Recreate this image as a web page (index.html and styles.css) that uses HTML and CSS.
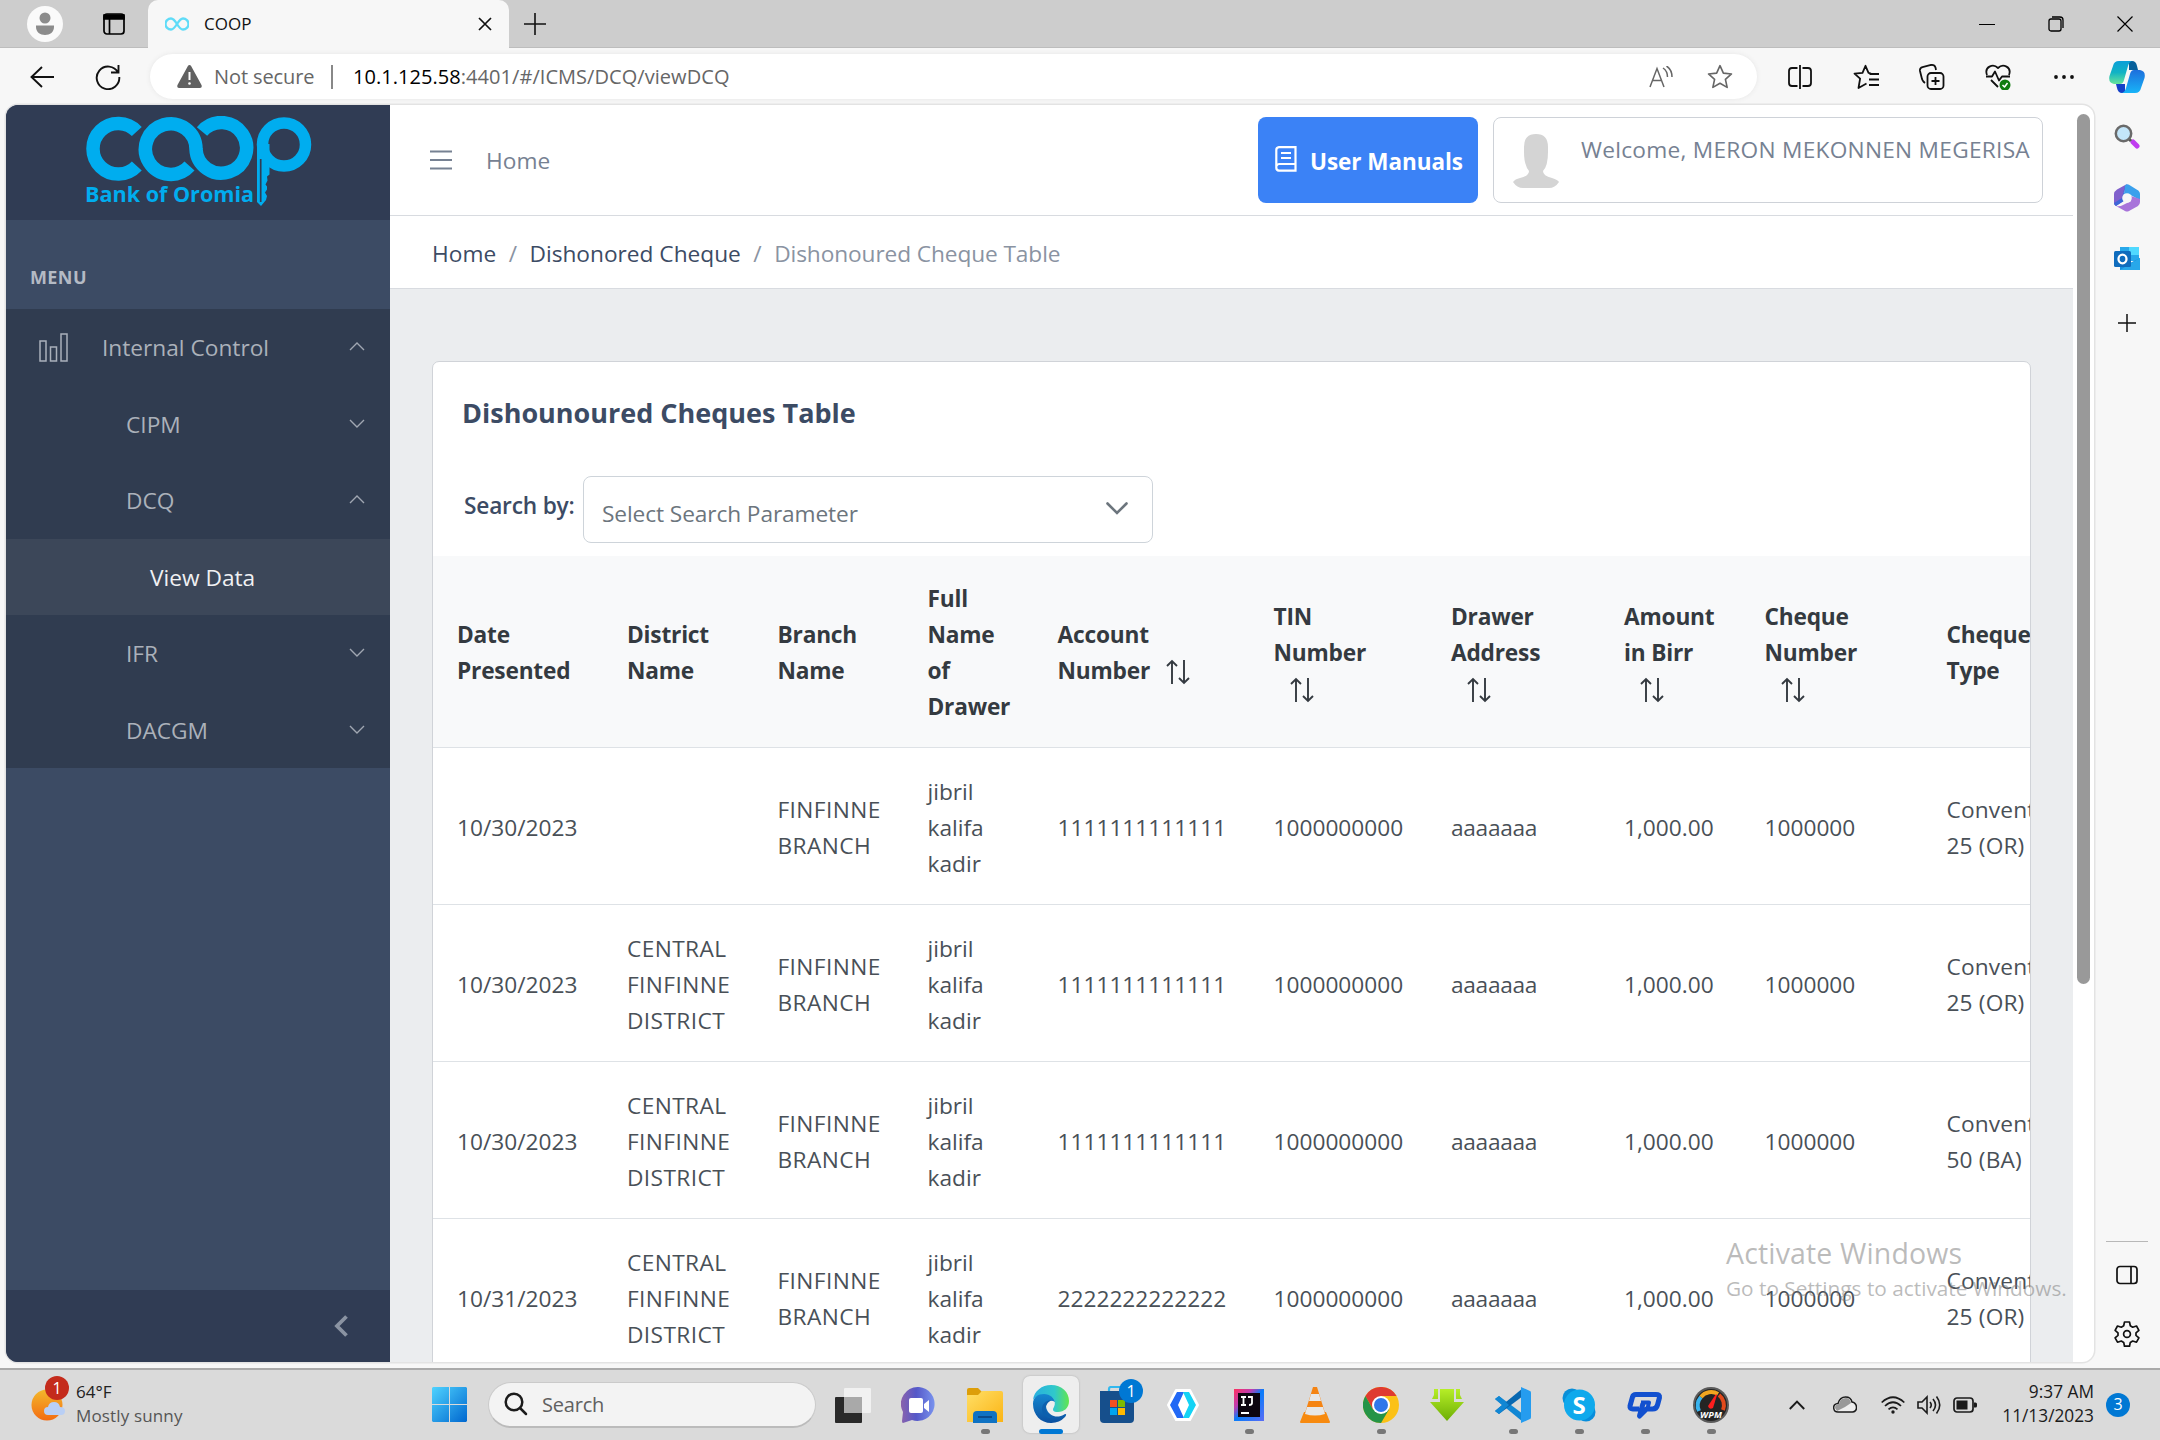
FILE: index.html
```html
<!DOCTYPE html>
<html lang="en">
<head>
<meta charset="utf-8">
<title>COOP</title>
<link rel="stylesheet" href="styles.css">
</head>
<body>
<div class="tabstrip">
  <svg class="profile" width="36" height="36" viewBox="0 0 36 36"><circle cx="18" cy="18" r="18" fill="#fafafa"/><circle cx="18" cy="12" r="5.500" fill="#8c8c8c"/><path d="M9 19.500h18v1.500c0 5-4 8-9 8s-9-3-9-8z" fill="#8c8c8c"/></svg>
  <svg class="workspace" width="22" height="22" viewBox="0 0 22 22" fill="none" stroke="#000" stroke-width="1.700"><rect x="1" y="1" width="20" height="20" rx="3"/><path d="M1 2h20v4H1z" fill="#000"/><path d="M6.500 6v15"/></svg>
  <div class="tab">
    <svg width="24" height="14" viewBox="0 0 24 14" fill="none" stroke="#5fdcf8" stroke-width="2.300"><path d="M12 7C9 2 7.500 1.500 6 1.500a5.500 5.500 0 0 0 0 11C8 12.500 9.500 11 12 7s4-5.500 6-5.500a5.500 5.500 0 0 1 0 11C16.500 12.500 15 12 12 7z"/></svg>
    <span class="tab-title">COOP</span>
    <svg width="14" height="14" viewBox="0 0 14 14" stroke="#111" stroke-width="1.700"><path d="M1 1l12 12M13 1L1 13"/></svg>
  </div>
  <svg class="newtab" width="22" height="22" viewBox="0 0 22 22" stroke="#111" stroke-width="1.600"><path d="M11 0v22M0 11h22"/></svg>
  <div class="winctl">
    <svg width="16" height="16" viewBox="0 0 16 16" stroke="#000"><path d="M0 8.500h16"/></svg>
    <svg width="16" height="16" viewBox="0 0 16 16" fill="none" stroke="#000" stroke-width="1.300"><rect x="1" y="3" width="12" height="12" rx="2"/><path d="M4 1h8q3 0 3 3v8"/></svg>
    <svg width="16" height="16" viewBox="0 0 16 16" stroke="#000" stroke-width="1.200"><path d="M.5.5l15 15M15.500.5l-15 15"/></svg>
  </div>
</div>

<div class="toolbar">
  <svg class="back" width="24" height="22" viewBox="0 0 24 22" fill="none" stroke="#111" stroke-width="1.900"><path d="M24 11H1.500M12 1L1.500 11 12 21"/></svg>
  <svg class="reload" width="26" height="26" viewBox="0 0 26 26" fill="none" stroke="#111" stroke-width="1.900"><path d="M23 8.500A11.300 11.300 0 1 0 24.300 13M23.500 1v7.500H16"/></svg>
  <div class="address">
    <svg width="25" height="23" viewBox="0 0 25 23"><path d="M12.500 0q1 0 1.600 1.100L24.500 20q1 2.600-1.500 3H2q-2.500-.4-1.500-3L10.900 1.100Q11.500 0 12.500 0z" fill="#616161"/><path d="M12.500 7v8" stroke="#fff" stroke-width="2"/><circle cx="12.500" cy="18.500" r="1.300" fill="#fff"/></svg>
    <span class="insecure">Not secure</span><i class="divider"></i><span class="url"><b>10.1.125.58</b>:4401/#/ICMS/DCQ/viewDCQ</span>
    <svg class="read" width="24" height="22" viewBox="0 0 24 22" fill="none" stroke="#666" stroke-width="1.500"><path d="M1 21L8 2.500 15 21M3.500 14.500h9M14 2q4.500 3 4.500 9M17.500 0Q23 3.500 23 11"/></svg>
    <svg width="26" height="26" viewBox="0 0 24 24" fill="none" stroke="#666" stroke-width="1.500" stroke-linejoin="round"><path d="M12 1.500l3.100 6.900 7.500.8-5.600 5 1.600 7.400L12 17.800l-6.600 3.800L7 14.200l-5.600-5 7.500-.8z"/></svg>
  </div>
  <div class="tools">
    <svg width="26" height="26" viewBox="0 0 26 26" fill="none" stroke="#111" stroke-width="1.800"><path d="M10.500 4H5Q2 4 2 7v12q0 3 3 3h5.500M15.500 4H21q3 0 3 3v12q0 3-3 3h-5.500M13 1v24"/></svg>
    <svg width="26" height="26" viewBox="0 0 26 26" fill="none" stroke="#111" stroke-width="1.800" stroke-linejoin="round"><path d="M18 9.500L15.500 8.800 12.500 1.800 9.500 8.800l-8 .8 5.600 5-1.600 9.400 8-4.500M16.500 10H26M16 15.500h10M16 21h10"/></svg>
    <svg width="26" height="26" viewBox="0 0 26 26" fill="none" stroke="#111" stroke-width="1.800"><rect x="8.500" y="9" width="16" height="16" rx="3.500"/><path d="M16.500 13v8M12.500 17h8M6 19Q3 17 2.500 13L1 7q-.5-3 2.500-3.800L12 1q3.500-.5 4.500 2.500l.5 2.500"/></svg>
    <svg width="26" height="26" viewBox="0 0 26 26" fill="none" stroke="#111" stroke-width="1.800" stroke-linejoin="round"><path d="M2 11C-1 3 8-1 13 4c5-5 14-1 11 7M1 12.500h6l3-5 4 9 3-4h8M6 16l7 7"/><circle cx="20" cy="21" r="5.500" fill="#107c10" stroke="none"/><path d="M17.500 21l2 2 3-4" stroke="#fff" stroke-width="1.500"/></svg>
    <svg width="26" height="26" viewBox="0 0 26 26" fill="#111"><circle cx="5" cy="13" r="1.900"/><circle cx="13" cy="13" r="1.900"/><circle cx="21" cy="13" r="1.900"/></svg>
  </div>
  <svg class="copilot" width="36" height="34" viewBox="0 0 36 34"><defs><linearGradient id="cpa" x2="0" y2="1"><stop stop-color="#0b9fd8"/><stop offset=".5" stop-color="#12b3c4"/><stop offset="1" stop-color="#67e49a"/></linearGradient><linearGradient id="cpb" x2="0" y2="1"><stop stop-color="#1d6fdc"/><stop offset="1" stop-color="#18b4f8"/></linearGradient></defs><path d="M20 1h3q4 0 5 5l1 4h-9z" fill="#07609a"/><path d="M16 33h-3q-4 0-5-5l-1-4h9z" fill="#1440c8"/><path d="M10 1h13q-3 1-4 5l-4 14q-1 4-4 4H5q-6-1-4.500-8L4 6q1-5 6-5z" fill="url(#cpa)"/><path d="M26 33H13q3-1 4-5l4-14q1-4 4-4h6q6 1 4.500 8L32 28q-1 5-6 5z" fill="url(#cpb)"/></svg>
</div>

<div class="middle">
  <div class="page">
    <aside class="sidebar">
      <div class="brand">
        <svg width="228" height="92" viewBox="85 116 228 92" fill="none" stroke="#00adef" stroke-width="13.500"><path d="M136.800 131.500A25.300 25.300 0 1 0 136.800 166"/><path d="M189.500 166A25.300 25.300 0 1 1 196 149A25.300 25.300 0 1 0 202 131.500"/><circle cx="284" cy="144.500" r="21.500" stroke-width="11.500"/><path d="M257 144h12.500v30.500l-2.500 2 .5 4-2 4 1.500 2v3l-2 3 2 3.500-1 4-5 6-4-4z" fill="#00adef" stroke="none"/><path d="M260.700 159v43" stroke="#303c54" stroke-width="1.700"/><text x="85" y="201.500" textLength="169" lengthAdjust="spacingAndGlyphs" fill="#00adef" stroke="none" class="logo-text">Bank of Oromia</text></svg>
      </div>
      <div class="menu-title">MENU</div>
      <nav>
        <a class="root"><svg class="bars" width="29" height="29" viewBox="0 0 29 29" fill="none" stroke="#a9b0ba" stroke-width="1.500"><path d="M1 8h6v20H1zM11.500 14h6v14h-6zM22 1h6v27h-6z"/></svg>Internal Control<svg class="arrow up" viewBox="0 0 16 9"><path d="M1 1l7 7 7-7"/></svg></a>
        <a>CIPM<svg class="arrow" viewBox="0 0 16 9"><path d="M1 1l7 7 7-7"/></svg></a>
        <a>DCQ<svg class="arrow up" viewBox="0 0 16 9"><path d="M1 1l7 7 7-7"/></svg></a>
        <a class="active">View Data</a>
        <a>IFR<svg class="arrow" viewBox="0 0 16 9"><path d="M1 1l7 7 7-7"/></svg></a>
        <a>DACGM<svg class="arrow" viewBox="0 0 16 9"><path d="M1 1l7 7 7-7"/></svg></a>
      </nav>
      <div class="minimizer"><svg width="14" height="22" viewBox="0 0 14 22" fill="none" stroke="#8a93a2" stroke-width="3.800"><path d="M12.500 1.500L3 11l9.500 9.500"/></svg></div>
    </aside>
    <main>
      <header>
        <svg class="burger" width="22" height="20" viewBox="0 0 22 20" stroke="#768192" stroke-width="2"><path d="M0 1.500h22M0 10h22M0 18.500h22"/></svg>
        <span class="home">Home</span>
        <button class="manuals"><svg width="22" height="26" viewBox="0 0 22 26" fill="none" stroke="#fff" stroke-width="2.200"><path d="M4 1.200h16.500v23.500H4q-2.700-.3-2.700-3V4Q1.300 1.500 4 1.200zM1.500 20q.5-2 3-2h16M6 7h10M6 12h10"/></svg>User Manuals</button>
        <div class="welcome"><svg width="46" height="54" viewBox="0 0 46 54"><path d="M11 13Q11 0 23 0t12 13v5q0 14-5 19 0 5 9 7 6 2 7 4-4 6-10 6H10Q4 54 0 48q2-3 7-4 9-2 9-7-5-6-5-19z" fill="#d4d4d4"/></svg><span>Welcome, MERON MEKONNEN MEGERISA</span></div>
      </header>
      <div class="crumbs"><span>Home</span><em>/</em><span>Dishonored Cheque</span><em>/</em><span class="current">Dishonoured Cheque Table</span></div>
      <section class="card">
        <h1>Dishounoured Cheques Table</h1>
        <div class="search"><label>Search by:</label><div class="select"><span>Select Search Parameter</span><svg width="22" height="13" viewBox="0 0 22 13" fill="none" stroke="#6c757d" stroke-width="2.600" stroke-linecap="round"><path d="M1.500 1.500L11 11l9.500-9.500"/></svg></div></div>
        <table>
          <colgroup><col class="c1"><col class="c2"><col class="c3"><col class="c4"><col class="c5"><col class="c6"><col class="c7"><col class="c8"><col class="c9"><col class="c10"></colgroup>
          <thead><tr>
            <th>Date<br>Presented</th><th>District<br>Name</th><th>Branch<br>Name</th><th>Full<br>Name<br>of<br>Drawer</th>
            <th>Account<br>Number<svg class="sort" viewBox="0 0 24 26"><path d="M6 25V2M1 7l5-5 5 5M18 1v23M13 19l5 5 5-5"/></svg></th>
            <th>TIN<br>Number<br><svg class="sort" viewBox="0 0 24 26"><path d="M6 25V2M1 7l5-5 5 5M18 1v23M13 19l5 5 5-5"/></svg></th>
            <th>Drawer<br>Address<br><svg class="sort" viewBox="0 0 24 26"><path d="M6 25V2M1 7l5-5 5 5M18 1v23M13 19l5 5 5-5"/></svg></th>
            <th>Amount<br>in Birr<br><svg class="sort" viewBox="0 0 24 26"><path d="M6 25V2M1 7l5-5 5 5M18 1v23M13 19l5 5 5-5"/></svg></th>
            <th>Cheque<br>Number<br><svg class="sort" viewBox="0 0 24 26"><path d="M6 25V2M1 7l5-5 5 5M18 1v23M13 19l5 5 5-5"/></svg></th>
            <th>Cheque<br>Type</th>
          </tr></thead>
          <tbody>
            <tr><td>10/30/2023</td><td class="caps"></td><td class="caps">FINFINNE<br>BRANCH</td><td>jibril<br>kalifa<br>kadir</td><td>1111111111111</td><td>1000000000</td><td class="addr">aaaaaaa</td><td>1,000.00</td><td>1000000</td><td class="type">Conventional<br>25 (OR)</td></tr>
            <tr><td>10/30/2023</td><td class="caps">CENTRAL<br>FINFINNE<br>DISTRICT</td><td class="caps">FINFINNE<br>BRANCH</td><td>jibril<br>kalifa<br>kadir</td><td>1111111111111</td><td>1000000000</td><td class="addr">aaaaaaa</td><td>1,000.00</td><td>1000000</td><td class="type">Conventional<br>25 (OR)</td></tr>
            <tr><td>10/30/2023</td><td class="caps">CENTRAL<br>FINFINNE<br>DISTRICT</td><td class="caps">FINFINNE<br>BRANCH</td><td>jibril<br>kalifa<br>kadir</td><td>1111111111111</td><td>1000000000</td><td class="addr">aaaaaaa</td><td>1,000.00</td><td>1000000</td><td class="type">Conventional<br>50 (BA)</td></tr>
            <tr><td>10/31/2023</td><td class="caps">CENTRAL<br>FINFINNE<br>DISTRICT</td><td class="caps">FINFINNE<br>BRANCH</td><td>jibril<br>kalifa<br>kadir</td><td>2222222222222</td><td>1000000000</td><td class="addr">aaaaaaa</td><td>1,000.00</td><td>1000000</td><td class="type">Conventional<br>25 (OR)</td></tr>
          </tbody>
        </table>
      </section>
    </main>
    <div class="scroll"><div class="thumb"></div></div>
  </div>
  <div class="edgebar">
    <svg width="26" height="26" viewBox="0 0 26 26"><path d="M19 18l4 4" stroke="#c03cf0" stroke-width="5" stroke-linecap="round"/><path d="M14 14l3 3" stroke="#555" stroke-width="3"/><circle cx="9.500" cy="9.500" r="7.700" fill="#c3e6fa" stroke="#6a6a6a" stroke-width="2.500"/></svg>
    <svg width="26" height="28" viewBox="0 0 26 28"><path d="M13 0L3 5.500Q0 7.500 0 10v9q0 2 2 3l7-5v-6q0-2 1-3z" fill="#8060cc"/><path d="M11 1.500q2-1.800 4-.8l8 5q3 1.500 3 4.500v6l-9-5-7-1z" fill="#3aa0ec"/><path d="M11 1.500L10 10v7l-8 5q-2-1-2-3l8-5z" fill="#3f66d8"/><path d="M26 15v3q0 2.500-2 4l-9 5q-2 1.200-4 0l-9-5q4 1 7-1l8-4V12z" fill="#a874da"/><circle cx="13" cy="14" r="4.800" fill="#f7f7f7"/></svg>
    <svg width="26" height="26" viewBox="0 0 26 26"><path d="M6 1h19v14H6z" fill="#28a8ea"/><path d="M15 1h10v8H15z" fill="#50d9ff"/><path d="M6 12l10 5 10-5v12H6z" fill="#1490df"/><path d="M6 24l20-12v12z" fill="#28a8ea"/><rect y="5" width="17" height="16" rx="1.500" fill="#0f6cbd"/><ellipse cx="8.500" cy="13" rx="4" ry="4.300" fill="none" stroke="#fff" stroke-width="2.300"/></svg>
    <svg class="add" width="18" height="18" viewBox="0 0 18 18" stroke="#111" stroke-width="1.500"><path d="M9 0v18M0 9h18"/></svg>
    <i class="rule"></i>
    <svg class="panel" width="22" height="20" viewBox="0 0 22 20" fill="none" stroke="#111" stroke-width="1.700"><rect x="1" y="1.500" width="20" height="17" rx="3"/><path d="M15 1.500v17"/></svg>
    <svg class="gear" width="26" height="26" viewBox="0 0 26 26" fill="none" stroke="#111" stroke-width="1.700" stroke-linejoin="round"><circle cx="13" cy="13" r="3.400"/><path d="M10.500 1h5l.8 3.800 2.400 1.400 3.800-1.200 2.400 4.300-2.900 2.500v2.600l2.900 2.500-2.400 4.300-3.800-1.200-2.400 1.400-.8 3.800h-5l-.8-3.800-2.400-1.400-3.800 1.200-2.400-4.300L4 14.400v-2.600L1.100 9.300 3.500 5l3.800 1.200 2.400-1.400z"/></svg>
  </div>
</div>

<div class="taskbar">
  <div class="weather">
    <div class="sun"><svg width="36" height="36" viewBox="0 0 36 36"><defs><linearGradient id="sun" x2="0" y2="1"><stop stop-color="#f3b92c"/><stop offset="1" stop-color="#f36c12"/></linearGradient></defs><circle cx="16" cy="16" r="15.500" fill="url(#sun)"/><path d="M17 26q-4 0-4-4t4-4q1-5 6-5t6 5q5 0 5 4t-4 4z" fill="#b9cff5"/></svg><span class="alert">1</span></div>
    <div><div class="deg">64°F</div><div class="cond">Mostly sunny</div></div>
  </div>
  <svg class="start" width="35" height="35" viewBox="0 0 35 35"><defs><linearGradient id="win" x2="1" y2="1"><stop stop-color="#4fd3ff"/><stop offset="1" stop-color="#0067cf"/></linearGradient></defs><path d="M1 0h16v17H0V1zM18 0h16l1 1v16H18zM0 18h17v17H1l-1-1zM18 18h17v16l-1 1H18z" fill="url(#win)"/></svg>
  <div class="find"><svg width="24" height="24" viewBox="0 0 24 24" fill="none" stroke="#1b1b1b" stroke-width="2.500" stroke-linecap="round"><circle cx="10" cy="10" r="8.300"/><path d="M16 16l6 6"/></svg>Search</div>
  <div class="apps">
    <div><svg width="36" height="36" viewBox="0 0 36 36"><rect x="0" y="10" width="27" height="26" rx="1" fill="#292929"/><rect x="9" y="1" width="27" height="25" rx="1" fill="#f4f4f4" fill-opacity=".88"/><path d="M9 10h18v16H9z" fill="#a9a9a9"/></svg></div>
    <div><svg width="36" height="38" viewBox="0 0 36 38"><defs><linearGradient id="cht" x2="1"><stop stop-color="#8a62ad"/><stop offset=".45" stop-color="#5558c8"/><stop offset="1" stop-color="#7993ee"/></linearGradient></defs><path d="M18 1a17 17 0 1 1-7 33l-9 3q-1 0-1-2l1-9A17 17 0 0 1 18 1z" fill="url(#cht)"/><rect x="8" y="12" width="14" height="15" rx="2" fill="#fff"/><path d="M23 18l5-4v12l-5-4z" fill="#fff"/></svg></div>
    <div class="run"><svg width="36" height="36" viewBox="0 0 36 36"><defs><linearGradient id="fol" x2="1" y2="1"><stop stop-color="#ffdf67"/><stop offset="1" stop-color="#fbb414"/></linearGradient></defs><path d="M0 3q0-2 2-2h9l4 4v6H0z" fill="#dd9e09"/><path d="M0 8h11l4-4h19q2 0 2 2v29H0z" fill="url(#fol)"/><path d="M6 36v-8q0-4 4-4h16q4 0 4 4v8z" fill="#0f72c3"/><path d="M11 30h14" stroke="#0a4b8c" stroke-width="2"/></svg></div>
    <div class="on"><svg width="38" height="38" viewBox="0 0 38 38"><defs><linearGradient id="ea" x2="1"><stop stop-color="#28afe0"/><stop offset=".6" stop-color="#30c8cb"/><stop offset="1" stop-color="#62e64d"/></linearGradient><linearGradient id="eb" x2="0" y2="1"><stop stop-color="#1587d0"/><stop offset="1" stop-color="#0b50a0"/></linearGradient></defs><path d="M1 15C2 6 10 0 19 0c11 0 18 7 18 16 0 7-5 11-11 11-5 0-6-2-4-5 3-6-2-12-9-12C7 10 3 12 1 15z" fill="url(#ea)"/><path d="M1 19C1 12 6 9 12 9s10 4 11 8c-6-4-11 2-8 8s10 9 18 4c2 0 1 2 0 3a19 19 0 0 1-14 6C9 38 1 30 1 19z" fill="url(#eb)"/><path d="M20 15c-9 4-8 14 0 18-5 1-10-3-10-9 0-5 4-9 10-9z" fill="#0c60ae"/></svg></div>
    <div class="store"><svg width="36" height="38" viewBox="0 0 36 38"><path d="M10 8V3q0-2 2-2h12q2 0 2 2v5" fill="none" stroke="#32b8ee" stroke-width="2.200"/><path d="M1 5h34v28q0 4-4 4H5q-4 0-4-4z" fill="#164f8c"/><path d="M11 14h7v7h-7z" fill="#f25022"/><path d="M19 14h7v7h-7z" fill="#7fba00"/><path d="M11 22h7v7h-7z" fill="#00a4ef"/><path d="M19 22h7v7h-7z" fill="#ffb900"/></svg><span class="count">1</span></div>
    <div><svg width="32" height="32" viewBox="0 0 32 32"><path d="M9 1h14l8 15-8 15H9L1 16z" fill="#fff" stroke="#fff" stroke-width="2" stroke-linejoin="round"/><path d="M10 3h7l-6 13 6 13h-7L3 16z" fill="#2168f5"/><path d="M16 3h6l7 13-7 13h-6l6-13z" fill="#14d3f5"/><path d="M16 9l4 7-4 7-4-7z" fill="#fff"/></svg></div>
    <div class="run"><svg width="30" height="32" viewBox="0 0 30 32"><defs><linearGradient id="ij" x2="1" y2="1"><stop stop-color="#fe315d"/><stop offset=".3" stop-color="#c13bb0"/><stop offset=".5" stop-color="#087cfa"/><stop offset="1" stop-color="#5b6cf5"/></linearGradient></defs><path d="M0 0h30v32H0z" fill="url(#ij)"/><path d="M4 4h22v24H4z" fill="#0d0510"/><path d="M7 8h5M9.500 8v8M7 16h5M14 8h4v6q0 2-3 2M7 24h8" fill="none" stroke="#fff" stroke-width="1.800"/></svg></div>
    <div><svg width="32" height="38" viewBox="0 0 32 38"><path d="M5 26h22l4 10q0 1-1 1H2q-1 0-1-1z" fill="#f78a0f"/><path d="M14 1h4l8 26q-10 5-20 0z" fill="#f58413"/><path d="M12 8h8l2 7H10zM8 21h16l2 7q-10 3-20 0z" fill="#e7e7e7"/></svg></div>
    <div class="run"><svg width="36" height="36" viewBox="0 0 36 36"><circle cx="18" cy="18" r="18" fill="#fbc116"/><path d="M2.400 9A18 18 0 0 1 33.600 9H18l-8 13.500z" fill="#df3a31"/><path d="M2.400 9A18 18 0 0 0 18 36l8-13.500H10z" fill="#259447"/><circle cx="18" cy="18" r="9" fill="#fff"/><circle cx="18" cy="18" r="7" fill="#3077ea"/></svg></div>
    <div><svg width="36" height="36" viewBox="0 0 36 36"><defs><linearGradient id="gr" x2="0" y2="1"><stop stop-color="#b6ee27"/><stop offset="1" stop-color="#6dae05"/></linearGradient></defs><path d="M11 2h14v13h10L18 34 1 15h10zM5 2h4v10H3l2-4zM27 2h4v6l2 4h-6z" fill="url(#gr)"/></svg></div>
    <div class="run"><svg width="36" height="36" viewBox="0 0 36 36"><path d="M0 12l4-3 24 18v8z" fill="#1187d4"/><path d="M0 24l4 3L28 9V1z" fill="#0868b1"/><path d="M0 12l4-3 10 9-10 9-4-3 7-6z" fill="#1187d4"/><path d="M26 0l9 4q1 0 1 2v24q0 2-1 2l-9 4z" fill="#259cef"/></svg></div>
    <div class="run"><svg width="34" height="34" viewBox="0 0 34 34"><circle cx="10" cy="10" r="9.500" fill="#0a8fd8"/><circle cx="24" cy="24" r="9.500" fill="#078ddc"/><circle cx="17.500" cy="17" r="15.500" fill="#0fa9ec"/><text x="17" y="25.500" class="skype" text-anchor="middle">S</text></svg></div>
    <div class="run"><svg width="36" height="30" viewBox="0 0 36 30" fill="none" stroke="#1250cf" stroke-width="5" stroke-linejoin="round"><path d="M12 19H6q-3.500 0-3-3L5.500 7Q6 4.500 9 4.500h20q4 0 3.500 3L30.500 15q-1 4-5 4h-6l-7 7 3.500-12.500"/><path d="M14 12.500h8l-1.500 6" stroke-width="4"/></svg></div>
    <div class="run"><svg width="36" height="36" viewBox="0 0 36 36"><circle cx="18" cy="18" r="18" fill="#5b5b5b"/><circle cx="18" cy="18" r="16" fill="#242424"/><path d="M6 24A13 13 0 0 1 8 10" fill="none" stroke="#38b3ee" stroke-width="4"/><path d="M8 10A13 13 0 0 1 25 7" fill="none" stroke="#f1a620" stroke-width="4"/><path d="M26 8A13 13 0 0 1 30 23" fill="none" stroke="#e24a1c" stroke-width="4"/><path d="M15 19l8-12 1 1-4 13q-4 2-5-2z" fill="#ff1e1e"/><text x="18" y="31" text-anchor="middle" class="wpm" textLength="22">WPM</text></svg></div>
  </div>
  <div class="tray">
    <svg class="t1" width="16" height="10" viewBox="0 0 16 10" fill="none" stroke="#1b1b1b" stroke-width="1.900"><path d="M.8 9L8 1.500 15.200 9"/></svg>
    <svg class="t2" width="24" height="17" viewBox="0 0 24 17"><path d="M5 16q-4 0-4.300-4T5 7.500Q7 1 12.500 1T19 6q4.500 1 4.500 5.500 0 4-4 4.500z" fill="#eee" stroke="#1b1b1b" stroke-width="1.500"/><path d="M2 12q0-4 4-4 1-6 7-6 4 0 5 5l-6 4-8 4z" fill="#999"/></svg>
    <svg class="t3" width="24" height="18" viewBox="0 0 24 18" fill="none" stroke="#1b1b1b" stroke-width="1.700"><path d="M.7 6.500Q12-4 23.300 6.500M4 10q8-7.500 16 0M7.500 13.300q4.500-4 9 0"/><circle cx="12" cy="16" r="1.700" fill="#1b1b1b" stroke="none"/></svg>
    <svg class="t4" width="24" height="20" viewBox="0 0 24 20" fill="none" stroke="#1b1b1b" stroke-width="1.600"><path d="M1 7h4l5-5v16l-5-5H1zM13 7q2.500 3 0 6M16 4q5 6 0 12M19.500 1.500q6.500 8.500 0 17"/></svg>
    <svg class="t5" width="24" height="16" viewBox="0 0 24 16"><rect x="1" y="1" width="19" height="14" rx="3" fill="none" stroke="#1b1b1b" stroke-width="1.700"/><path d="M3.500 3.500h11v9h-11zM21 5.500h1.500q1.500 0 1.500 1.500v2q0 1.500-1.500 1.500H21z" fill="#1b1b1b"/></svg>
    <div class="clock">9:37 AM<br>11/13/2023</div>
    <span class="notif">3</span>
  </div>
</div>
<div class="watermark"><div class="w1">Activate Windows</div><div class="w2">Go to Settings to activate Windows.</div></div>
</body>
</html>
```
FILE: styles.css
```css
*{box-sizing:border-box}
html{height:1440px;overflow:hidden}
body{margin:0;width:2160px;height:1440px;overflow:hidden;display:flex;flex-direction:column;background:#f7f7f7;font-family:"Open Sans","Noto Sans",sans-serif;font-size:22.7px;color:#111}
svg{flex:none;display:block}
.tabstrip{height:48px;flex:none;background:#cdcdcd;display:flex;align-items:center;border-bottom:1px solid #bdbdbd}
.profile{margin-left:27px}
.workspace{margin-left:40px}
.tab{margin-left:23px;width:361px;height:48px;background:#f7f7f7;border-radius:10px 10px 0 0;display:flex;align-items:center;padding:0 17px;font-size:17px}
.tab-title{margin-left:15px;flex:1}
.newtab{margin-left:15px}
.winctl{margin-left:auto;display:flex;gap:53px;padding-right:27px}
.toolbar{height:57px;display:flex;align-items:center;flex:none}
.back{margin-left:30px}
.reload{margin-left:41px}
.address{margin-left:29px;width:1607px;height:45px;border-radius:23px;background:#fff;box-shadow:0 0 5px #e6e6e6;display:flex;align-items:center;padding:0 24px 0 27px;font-size:20px;color:#666}
.insecure{margin-left:12px;width:101px;white-space:nowrap;letter-spacing:-.1px}
.divider{margin:0 20px 0 16px;width:2px;height:24px;background:#888}
.url{flex:1;letter-spacing:.05px}
.url b{font-weight:400;color:#000}
.read{margin-right:34px}
.tools{margin-left:30px;display:flex;gap:40px}
.copilot{margin-left:32px}
.middle{height:1263px;flex:none;display:flex;padding-left:6px}
.page{width:2088px;height:1257px;background:#fff;border-radius:12px;overflow:hidden;display:flex;box-shadow:0 0 0 1.500px #e3e3e3}
.sidebar{width:384px;background:#3c4b64;display:flex;flex-direction:column;color:#abb1ba}
.brand{height:115px;background:#303c54;padding:11px 0 0 79px}
.logo-text{font:700 22px "Open Sans",sans-serif}
.menu-title{height:89px;padding:43px 0 0 24px;font-size:18px;font-weight:700;letter-spacing:.4px;line-height:28px;color:#b4bac4}
nav{background:#303c50}
nav a{height:76.5px;display:flex;align-items:center;padding:1px 25px 0 120px}
nav a.root{padding-left:33px}
.bars{margin-right:34px}
nav a.active{padding-left:144px;background:#3c4759;color:#f0f1f3}
.arrow{width:16px;height:9px;margin:0 0 2px auto;fill:none;stroke:#a0a7b2;stroke-width:1.400}
.arrow.up{transform:scaleY(-1)}
.minimizer{margin-top:auto;height:72px;background:#303c54;display:flex;align-items:center;justify-content:flex-end;padding-right:42px}
main{width:1683px;background:#ebedef}
header{height:110.500px;background:#fff;border-bottom:1.500px solid #d8dbe0;display:flex;align-items:center;padding:0 30px 0 40px;color:#768192}
.home{margin:2px 0 0 34px;flex:1}
.manuals{width:220px;height:86px;border:0;border-radius:8px;background:#3b82f6;color:#fff;font:700 22.500px "Open Sans",sans-serif;letter-spacing:-.05px;display:flex;align-items:center;padding:4px 0 0 17px;gap:13px;white-space:nowrap}
.manuals svg{margin-top:-6px}
.welcome{margin-left:15px;width:550px;height:86px;border:1.500px solid #ced2d8;border-radius:8px;display:flex;padding:16px 0 0 19px;white-space:nowrap}
.welcome span{margin-left:22px;letter-spacing:.26px}
.crumbs{height:73px;background:#fff;border-bottom:1.500px solid #d8dbe0;display:flex;align-items:center;padding:3px 0 0 42px;color:#3c4b64}
.crumbs em{font-style:normal;color:#8a93a2;margin:0 12.500px}
.crumbs .current{color:#8a93a2;letter-spacing:-.1px}
.card{margin:72px 0 0 42px;width:1599px;height:1010px;background:#fff;border:1.500px solid #d0d3d8;border-radius:7px;overflow:hidden}
h1{margin:0;height:114px;padding:31px 0 0 29px;font-size:27px;line-height:40px;font-weight:700;color:#3c4b64}
.search{height:80px;display:flex;padding-left:31px;color:#3c4b64}
.search label{width:119px;padding-top:14px;line-height:32px;white-space:nowrap;font-weight:600;letter-spacing:-.2px}
.select{width:570px;height:67px;border:1.500px solid #ced4da;border-radius:8px;display:flex;justify-content:space-between;padding:21px 24px 0 18px;color:#6c757d;line-height:32px;letter-spacing:-.1px}
.select svg{margin-top:4px}
table{width:1699px;table-layout:fixed;border-collapse:separate;border-spacing:0}
.c1{width:170px}.c2{width:150.5px}.c3{width:150px}.c4{width:130px}.c5{width:216px}.c6{width:177.5px}.c7{width:173px}.c8{width:140.5px}.c9{width:182px}.c10{width:209.5px}
th,td{padding:0 0 0 24px;text-align:left;vertical-align:middle;line-height:36px;border-bottom:1.500px solid #dee2e6;white-space:nowrap}
th{height:192.500px;background:#f8f9fa;color:#343a40;font-weight:700;letter-spacing:-.2px;padding-top:3px}
td{height:157px;color:#495057;padding-top:3px}
.caps{letter-spacing:.4px}
.addr{letter-spacing:-.3px}
.type{letter-spacing:.15px}
.sort{display:inline-block;width:24px;height:26px;margin-left:16px;vertical-align:-6px;fill:none;stroke:#343a40;stroke-width:1.900}
.scroll{width:21px;padding:9px 0 0 4px}
.thumb{width:13px;height:870px;border-radius:7px;background:#999}
.edgebar{width:66px;display:flex;flex-direction:column;align-items:center;padding-top:19px;gap:34px}
.edgebar .add{margin-top:8px}
.rule{width:42px;height:1px;background:#b8b8b8;margin-top:auto}
.panel{margin-top:-11px}
.gear{margin:2px 0 21px}
.taskbar{height:72px;background:#dadada;border-top:2px solid #aaa;display:flex;align-items:center;flex:none;position:relative;padding-bottom:1px}
.weather{display:flex;margin-left:31px;width:395px;font-size:17px;line-height:24px;color:#222}
.sun{position:relative;width:45px;padding-top:8px}
.alert{position:absolute;left:14px;top:-5px;width:24px;height:24px;border-radius:50%;background:#c42b1c;color:#fff;text-align:center;font-size:16px}
.weather .deg{margin-top:-1px}
.cond{color:#555;white-space:nowrap;letter-spacing:.15px}
.start{margin-left:6px}
.find{margin-left:21px;width:328px;height:46px;border-radius:23px;background:#f3f3f3;border:1px solid #cacaca;border-bottom:2px solid #bbb;display:flex;align-items:center;padding-left:15px;gap:14px;color:#606060;font-size:20px;letter-spacing:-.2px}
.apps{display:flex;margin-left:4px}
.apps>div{width:66px;height:68px;display:flex;align-items:center;justify-content:center;position:relative}
.apps .run::after{content:"";position:absolute;left:28.500px;bottom:5px;width:9px;height:5px;border-radius:3px;background:#777}
.apps .on{width:56px;height:57px;margin:5px 5px;background:#eee;border-radius:7px;box-shadow:0 0 2px #aaa}
.apps .on::after{content:"";position:absolute;left:16px;bottom:-1px;width:24px;height:5px;border-radius:3px;background:#0078d4}
.count{position:absolute;left:35px;top:8px;width:24px;height:24px;border-radius:50%;background:#0078d4;color:#fff;font-size:16px;line-height:24px;text-align:center}
.skype{font:700 24px "Open Sans",sans-serif;fill:#fff}
.wpm{font:italic 700 9px "Open Sans",sans-serif;fill:#fff}
.tray{margin-left:45px;display:flex;align-items:center}
.t2{margin-left:28px}.t3{margin-left:24px}.t4,.t5{margin-left:12px}
.clock{margin-left:19px;width:98px;margin-top:-2px;text-align:right;font-size:17.300px;line-height:24px;color:#1b1b1b;white-space:nowrap}
.notif{margin-left:12px;width:24px;height:24px;border-radius:50%;background:#0078d4;color:#fff;font-size:16px;line-height:23px;text-align:center}
.watermark{position:absolute;left:1726px;top:1233px;color:rgba(120,120,120,.5);white-space:nowrap}
.w1{font-size:28.500px;line-height:40px;letter-spacing:.15px}
.w2{font-size:20.800px;line-height:30px}
```
